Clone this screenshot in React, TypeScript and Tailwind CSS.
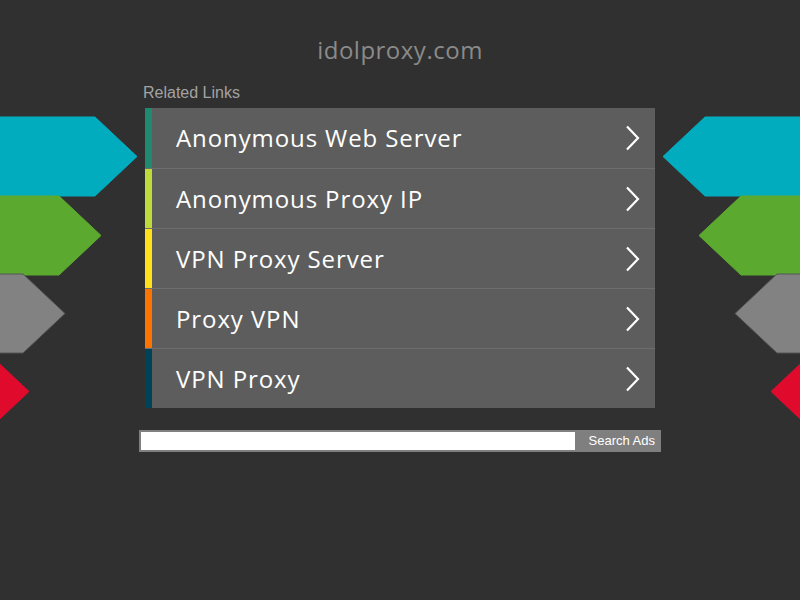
import React from "react";

const links = [
  { label: "Anonymous Web Server", bar: "bg-[#1f8a70]" },
  { label: "Anonymous Proxy IP", bar: "bg-[#bedb39]" },
  { label: "VPN Proxy Server", bar: "bg-[#ffe11a]" },
  { label: "Proxy VPN", bar: "bg-[#fd7400]" },
  { label: "VPN Proxy", bar: "bg-[#004358]" },
];

// decorative arrows on the sides: [fill, stroke, rect end x, tip x, top y]
const arrows = [
  { fill: "#02acbf", stroke: "#02acbf", end: 95, tip: 137, top: 117 },
  { fill: "#5ca930", stroke: "#5ca930", end: 59, tip: 101, top: 196 },
  { fill: "#828282", stroke: "#555555", end: 23, tip: 65, top: 274 },
  { fill: "#e00a2d", stroke: "#e00a2d", end: -13, tip: 29, top: 352 },
];

function Arrows({ flip }: { flip?: boolean }) {
  return (
    <svg
      width="140"
      height="440"
      viewBox="0 0 140 440"
      className={`absolute top-0 ${flip ? "right-0 -scale-x-100" : "left-0"}`}
    >
      {arrows.map((a, i) => (
        <polygon
          key={i}
          points={`-20,${a.top} ${a.end},${a.top} ${a.tip},${a.top + 39.5} ${a.end},${a.top + 79} -20,${a.top + 79}`}
          fill={a.fill}
          stroke={a.stroke}
          strokeWidth="1"
        />
      ))}
    </svg>
  );
}

function Chevron() {
  return (
    <svg width="16" height="26" viewBox="0 0 16 26" className="shrink-0">
      <path d="M2 1.5 L13 13 L2 24.5" fill="none" stroke="#fff" strokeWidth="2.2" />
    </svg>
  );
}

export default function App() {
  return (
    <div className="relative w-[800px] h-[600px] bg-[#303030] overflow-hidden font-['Liberation_Sans',Arial,sans-serif]">
      <Arrows />
      <Arrows flip />

      <div className="flex flex-col items-center pt-[35px]">
        <h1 className="text-[24px] leading-[30px] text-[#8a8a8a] font-['Open_Sans',sans-serif] tracking-[0.5px]">
          idolproxy.com
        </h1>

        <div className="w-[510px] mt-[19px]">
          <div className="text-[16px] leading-[18px] text-[#a3a3a3] -ml-[2px]">Related Links</div>
          <div className="mt-[6px] flex flex-col">
            {links.map((l, i) => (
              <a
                key={l.label}
                href="#"
                className={`flex h-[60px] bg-[#5d5d5d] ${i > 0 ? "border-t border-[#6d6d6d]" : ""}`}
              >
                <div className={`w-[7px] shrink-0 ${l.bar}`} />
                <div className="flex flex-1 items-center pl-[24px] pr-[14px]">
                  <span className="flex-1 text-white text-[24px] font-['Open_Sans',sans-serif] tracking-[0.9px]">
                    {l.label}
                  </span>
                  <Chevron />
                </div>
              </a>
            ))}
          </div>
        </div>

        <div className="mt-[22px] flex w-[522px] h-[22px] bg-[#7f7f7f] p-[2px] pr-0">
          <input className="w-[434px] h-[18px] bg-white border-0 outline-none" />
          <button className="flex-1 text-white text-[13px] leading-[18px] text-right pr-[6px]">
            Search Ads
          </button>
        </div>
      </div>
    </div>
  );
}
